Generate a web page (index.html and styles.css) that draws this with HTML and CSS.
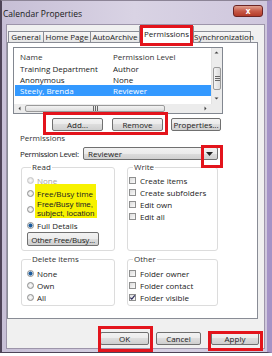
FILE: index.html
```html
<!DOCTYPE html>
<html lang="en">
<head>
  <meta charset="UTF-8" />
  <title>Calendar Properties</title>
  <link rel="stylesheet" href="styles.css">
</head>
<body>
  <div class="window">
    <div class="titlebar">
      <span class="title">Calendar Properties</span>
      <span class="close">x</span>
    </div>

    <div class="client">
      <div class="tabs">
        <div class="tab tab-general">General</div>
        <div class="tab tab-home">Home Page</div>
        <div class="tab tab-archive">AutoArchive</div>
        <div class="tab tab-perm active">Permissions</div>
        <div class="tab tab-sync">Synchronization</div>
      </div>

      <div class="panel">
        <div class="list">
          <div class="list-body">
            <div class="list-row list-head"><span class="col-name">Name</span><span>Permission Level</span></div>
            <div class="list-row"><span class="col-name">Training Department</span><span>Author</span></div>
            <div class="list-row"><span class="col-name">Anonymous</span><span>None</span></div>
            <div class="list-row selected"><span class="col-name">Steely, Brenda</span><span>Reviewer</span></div>
          </div>
          <div class="vscroll">
            <svg class="sb-arrow" width="11" height="9" viewBox="0 0 11 9"><polygon points="3.5,5.5 7.5,5.5 5.5,3.5" fill="#444"/></svg>
            <span class="sb-thumb v"><span class="grip v"></span></span>
            <svg class="sb-arrow" width="11" height="9" viewBox="0 0 11 9"><polygon points="3.5,3.5 7.5,3.5 5.5,5.5" fill="#444"/></svg>
          </div>
          <div class="hscroll">
            <svg class="sb-arrow" width="11" height="9" viewBox="0 0 11 9"><polygon points="6.5,2.5 6.5,6.5 4.5,4.5" fill="#444"/></svg>
            <span class="sb-thumb h"><span class="grip h"></span></span>
            <span class="sb-track"></span>
            <svg class="sb-arrow" width="11" height="9" viewBox="0 0 11 9"><polygon points="4.5,2.5 4.5,6.5 6.5,4.5" fill="#444"/></svg>
          </div>
          <div class="corner"></div>
        </div>

        <div class="btn-row">
          <div class="mark mark-addremove">
            <button class="btn btn-add">Add...</button>
            <button class="btn btn-remove">Remove</button>
          </div>
          <button class="btn btn-props">Properties...</button>
        </div>

        <div class="section-label">Permissions</div>

        <div class="level-row">
          <span class="level-label">Permission Level:</span>
          <div class="combo">
            <span>Reviewer</span>
            <svg class="combo-arrow" width="7" height="4" viewBox="0 0 7 4"><polygon points="0,0 7,0 3.5,4" fill="#222"/></svg>
            <span class="mark-arrow"></span>
          </div>
        </div>

        <div class="groups">
          <fieldset class="group group-read">
            <legend>Read</legend>
            <div class="opt disabled"><span class="radio"></span><span>None</span></div>
            <div class="opt opt-fb"><span class="radio"></span><span class="marker">Free/Busy time</span></div>
            <div class="opt opt-fbsl"><span class="radio"></span><span class="marker block">Free/Busy time,<br>subject, location</span></div>
            <div class="opt opt-full"><span class="radio on"></span><span>Full Details</span></div>
            <button class="btn btn-other">Other Free/Busy...</button>
          </fieldset>

          <fieldset class="group group-write">
            <legend>Write</legend>
            <div class="opt"><span class="check"></span><span>Create items</span></div>
            <div class="opt"><span class="check"></span><span>Create subfolders</span></div>
            <div class="opt"><span class="check"></span><span>Edit own</span></div>
            <div class="opt"><span class="check"></span><span>Edit all</span></div>
          </fieldset>

          <fieldset class="group group-delete">
            <legend>Delete items</legend>
            <div class="opt"><span class="radio on"></span><span>None</span></div>
            <div class="opt"><span class="radio"></span><span>Own</span></div>
            <div class="opt"><span class="radio"></span><span>All</span></div>
          </fieldset>

          <fieldset class="group group-other">
            <legend>Other</legend>
            <div class="opt"><span class="check"></span><span>Folder owner</span></div>
            <div class="opt"><span class="check"></span><span>Folder contact</span></div>
            <div class="opt"><span class="check on"><svg width="7" height="7" viewBox="0 0 7 7"><path d="M1.3 3.6 L2.8 5.2 L5.8 1.4" fill="none" stroke="#2a2a5a" stroke-width="1.1"/></svg></span><span>Folder visible</span></div>
          </fieldset>
        </div>
      </div>

      <div class="dialog-buttons">
        <button class="btn btn-ok">OK</button>
        <button class="btn btn-cancel">Cancel</button>
        <button class="btn btn-apply">Apply</button>
      </div>
    </div>
  </div>
</body>
</html>
```

FILE: styles.css
```css
body {
  margin: 0;
  background: #fff;
  font-family: "Open Sans", sans-serif;
  font-size: 8px;
  color: #222;
}
.window {
  width: 272px;
  height: 353px;
  box-sizing: border-box;
  display: flex;
  flex-direction: column;
  background: linear-gradient(90deg, #c7bfd6, #d9d3e4 50%, #cfc7dd);
  border-left: 2px solid #4e4458;
  border-bottom: 1px solid #4e4458;
  border-right: 5px solid #a493c6;
  border-top: 1px solid #8c8496;
  padding: 0 2px 3px 4px;
}
.titlebar {
  height: 23px;
  display: flex;
  justify-content: space-between;
  flex-shrink: 0;
}
.title {
  margin-left: -3px;
  margin-top: 7px;
  font-size: 8.5px;
  color: #1a1a1a;
}
.close {
  width: 30px;
  height: 12px;
  margin-top: 4px;
  margin-right: 2px;
  box-sizing: border-box;
  border: 1px solid #6b2424;
  border-radius: 3px;
  background: linear-gradient(#e0a090, #c75a48 50%, #b33a28);
  color: #fff;
  font-weight: bold;
  font-size: 8px;
  line-height: 10px;
  text-align: center;
}

/* dialog body */
.client {
  flex: 1;
  background: #f0f0f0;
  border: 1px solid #9d95aa;
  padding: 0 6px 0 0;
  display: flex;
  flex-direction: column;
}
.tabs {
  height: 17px;
  display: flex;
  align-items: flex-end;
  padding-left: 1px;
  flex-shrink: 0;
}
.tab {
  height: 11px;
  box-sizing: border-box;
  border: 1px solid #898c95;
  border-bottom: none;
  background: linear-gradient(#f6f6f6, #e6e6e6);
  margin-left: -1px;
  text-align: center;
  line-height: 10px;
  white-space: nowrap;
}
.tab-general { width: 36px; margin-left: 0; }
.tab-home { width: 48px; }
.tab-archive { width: 50px; }
.tab-perm { width: 55px; }
.tab-sync { width: 58px; }
.tab.active {
  position: relative;
  z-index: 2;
  height: 17px;
  margin-bottom: -1px;
  background: #fff;
  line-height: 13px;
}
.tab.active::after {
  content: "";
  position: absolute;
  inset: -2px 0 -3px 0;
  border: 3px solid #e3141c;
}
.panel {
  height: 277px;
  box-sizing: border-box;
  flex-shrink: 0;
  background: #fff;
  border: 1px solid #898c95;
}

/* list */
.list {
  margin: 4px 0 0 5px;
  width: 210px;
  height: 67px;
  box-sizing: border-box;
  border: 1px solid #828790;
  display: grid;
  grid-template-columns: 197px 11px;
  grid-template-rows: 56px 9px;
}
.list-body {
  padding-top: 3px;
}
.list-row {
  display: flex;
  height: 11px;
  line-height: 11px;
  margin-left: 1px;
  padding-left: 5px;
  white-space: nowrap;
}
.list-head {
  height: 12px;
  line-height: 12px;
  color: #333;
}
.col-name {
  width: 93px;
}
.list-row.selected {
  background: #3399ff;
  color: #fff;
}
.vscroll,
.hscroll {
  background: #ececec;
  display: flex;
}
.vscroll {
  flex-direction: column;
  border-left: 1px solid #e2e2e2;
}
.vscroll .sb-arrow {
  margin-left: -1px;
}
.sb-thumb {
  box-sizing: border-box;
  border: 1px solid #9a9a9a;
  border-radius: 2px;
  background: linear-gradient(90deg, #f3f3f3, #dcdcdc);
  display: flex;
  align-items: center;
  justify-content: center;
}
.sb-thumb.v {
  margin: 10px 1px 4px 1px;
  height: 23px;
}
.sb-thumb.h {
  width: 140px;
  margin: 1px 0;
  background: linear-gradient(#f3f3f3, #dcdcdc);
}
.sb-track {
  flex: 1;
}
.grip.v {
  width: 5px;
  height: 5px;
  background: repeating-linear-gradient(#666 0 1px, transparent 1px 2px);
}
.grip.h {
  width: 5px;
  height: 5px;
  background: repeating-linear-gradient(90deg, #666 0 1px, transparent 1px 2px);
}
.corner {
  background: #ececec;
}

/* buttons */
.btn {
  box-sizing: border-box;
  height: 13px;
  padding: 0;
  border: 1px solid #707070;
  border-radius: 2px;
  background: linear-gradient(#f2f2f2, #ebebeb 50%, #dddddd 50%, #cfcfcf);
  font-family: "Open Sans", sans-serif;
  font-size: 8px;
  line-height: 11px;
  color: #222;
  white-space: nowrap;
}
.btn-row {
  display: flex;
  margin: 4px 0 0 44px;
}
.mark {
  position: relative;
  display: flex;
  gap: 9px;
}
.mark-addremove::after {
  content: "";
  position: absolute;
  inset: -6px -5px -4px -9px;
  border: 3px solid #e3141c;
}
.btn-add,
.btn-remove {
  width: 51px;
}
.btn-props {
  width: 50px;
  margin-left: 8px;
}
.section-label {
  margin: 2px 0 0 12px;
  height: 10px;
  line-height: 10px;
  color: #333;
}
.level-row {
  display: flex;
  align-items: center;
  margin: 4px 0 0 12px;
}
.level-label {
  width: 63px;
  flex-shrink: 0;
  white-space: nowrap;
  letter-spacing: -0.35px;
}
.combo {
  position: relative;
  width: 135px;
  height: 13px;
  box-sizing: border-box;
  border: 1px solid #707070;
  border-radius: 2px;
  background: linear-gradient(#f2f2f2, #ebebeb 50%, #dddddd 50%, #cfcfcf);
  display: flex;
  align-items: center;
  justify-content: space-between;
  padding: 0 4px 0 4px;
}
.mark-arrow {
  position: absolute;
  right: -6px;
  top: -3px;
  width: 22px;
  height: 23px;
  box-sizing: border-box;
  border: 3px solid #e3141c;
}

/* option groups */
.groups {
  display: grid;
  grid-template-columns: 94px 91px;
  grid-template-rows: 89px 52px;
  gap: 3px 12px;
  margin: 2px 0 0 13px;
}
.group {
  margin: 0;
  padding: 0;
  border: 1px solid #dcdcdc;
  border-radius: 3px;
  min-width: 0;
  box-sizing: border-box;
  height: 100%;
}
.group legend {
  padding: 0 1px;
  margin-left: 4px;
  height: 10px;
  line-height: 10px;
  color: #333;
}
.group-read,
.group-delete {
  padding-left: 5px;
}
.group-read { padding-top: 2px; }
.group-write { padding: 2px 0 0 1px; }
.group-delete,
.group-other { padding-top: 3px; }
.group-other { padding-left: 1px; }
.opt {
  display: flex;
  align-items: center;
  height: 12px;
  gap: 3px;
  white-space: nowrap;
}
.group-write .opt,
.group-other .opt {
  gap: 4px;
}
.opt.disabled {
  color: #a5a5a5;
}
.opt-fb { margin-top: 1px; }
.opt-fbsl {
  margin-top: 1px;
  height: 18px;
}
.opt-full { margin-top: 1px; }
.marker {
  background: #f7f200;
  padding: 4px 3px 4px 2px;
  margin-left: -2px;
}
.marker.block {
  display: inline-block;
  padding: 0 3px 0 2px;
  font-family: "Liberation Sans", sans-serif;
  line-height: 9px;
}
.radio {
  width: 7px;
  height: 7px;
  box-sizing: border-box;
  flex-shrink: 0;
  border: 1px solid #8e8f8f;
  border-radius: 50%;
  background: radial-gradient(#fdfdfd, #d8d8d8);
}
.opt.disabled .radio {
  border-color: #c6c6c6;
}
.radio.on {
  background: radial-gradient(circle, #1d5b9c 0 1.8px, #cfe2f2 2.2px, #e6e6e6);
}
.check {
  width: 7px;
  height: 7px;
  box-sizing: border-box;
  flex-shrink: 0;
  border: 1px solid #8e8f8f;
  background: linear-gradient(135deg, #dcdcdc, #fafafa);
  position: relative;
}
.check svg {
  position: absolute;
  left: -1px;
  top: -1px;
}
.btn-other {
  width: 72px;
  height: 14px;
  margin-top: 1px;
  letter-spacing: -0.2px;
}

.dialog-buttons {
  display: flex;
  justify-content: flex-end;
  margin: 13px -1px 0 0;
}
.btn-ok {
  width: 49px;
  position: relative;
}
.btn-cancel {
  width: 45px;
  margin-left: 7px;
}
.btn-apply {
  width: 48px;
  margin-left: 10px;
  position: relative;
}
.btn-ok::after,
.btn-apply::after {
  content: "";
  position: absolute;
  border: 3px solid #e3141c;
}
.btn-ok::after {
  inset: -7px -5px -8px -3px;
}
.btn-apply::after {
  inset: -2px -5px -7px -4px;
}
```
